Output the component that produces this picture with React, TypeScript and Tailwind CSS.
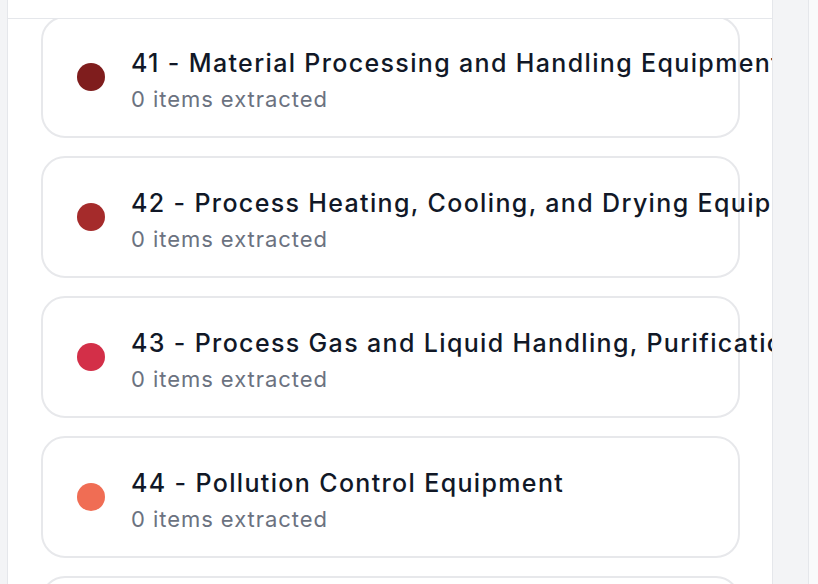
const GROUPS = [
  { code: "41", name: "Material Processing and Handling Equipment", color: "bg-[#7f1d1d]" },
  { code: "42", name: "Process Heating, Cooling, and Drying Equipment", color: "bg-[#a52b2b]" },
  { code: "43", name: "Process Gas and Liquid Handling, Purification, and Storage Equipment", color: "bg-[#d32f48]" },
  { code: "44", name: "Pollution Control Equipment", color: "bg-[#f06d54]" },
  { code: "45", name: "Industrial Production Equipment", color: "bg-[#f59e0b]" }
];

function GroupCard({ code, name, color }: { code: string; name: string; color: string }) {
  return (
    <div className="flex h-[122px] shrink-0 items-center rounded-3xl border-2 border-[#e7e8eb] bg-white pl-[34px]">
      <span className={`h-7 w-7 shrink-0 rounded-full ${color}`} />
      <div className="ml-[26px] pt-[6px]">
        <p className="whitespace-nowrap text-[25px] font-medium leading-[32px] tracking-[1.35px] text-[#111827]">
          {code} - {name}
        </p>
        <p className="mt-[5px] whitespace-nowrap text-[22px] leading-[30px] tracking-[0.95px] text-[#6b7280]">
          0 items extracted
        </p>
      </div>
    </div>
  );
}

export default function App() {
  return (
    <div
      className="flex h-[584px] w-[818px] overflow-hidden bg-[#f3f4f6]"
      style={{ fontFamily: "Inter, 'Noto Sans', sans-serif" }}
    >
      <div className="w-[7px] shrink-0" />
      <div className="flex w-[766px] shrink-0 flex-col overflow-hidden border-x border-[#e5e7eb] bg-white">
        <div className="relative z-10 h-[19px] shrink-0 border-b border-[#e5e7eb] bg-white" />
        <div className="flex-1 overflow-hidden">
          <div className="-mt-[3px] flex flex-col gap-[18px] pl-[33px] pr-[32px]">
            {GROUPS.map((g) => (
              <GroupCard key={g.code} {...g} />
            ))}
          </div>
        </div>
      </div>
      <div className="w-[35px] shrink-0" />
      <div className="w-px shrink-0 bg-[#e5e7eb]" />
      <div className="flex-1 bg-[#f9fafb]" />
    </div>
  );
}
